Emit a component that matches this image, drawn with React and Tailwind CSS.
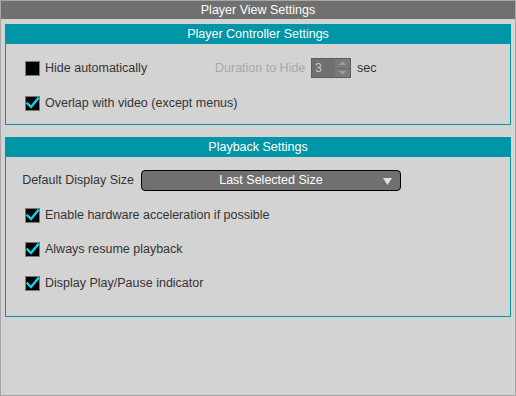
import React from "react";

function Check({ checked }) {
  return (
    <div className="w-[15px] h-[15px] bg-black border border-[#7a7a7a] relative shrink-0">
      {checked && (
        <svg className="absolute left-[0px] top-[0px]" width="13" height="13" viewBox="0 0 13 13">
          <path d="M1.5 6.5 L5 10 L12 1.5" stroke="#12d2f0" strokeWidth="2.4" fill="none" strokeLinecap="square" />
        </svg>
      )}
    </div>
  );
}

function Row({ checked, label, className }) {
  return (
    <div className={"h-[20px] flex items-center gap-[5px] pl-[19px] " + (className || "")}>
      <Check checked={checked} />
      <span className="text-[12.5px] text-[#333]">{label}</span>
    </div>
  );
}

function Section({ title, children, className }) {
  return (
    <div className={"border border-[#0096a8] flex flex-col " + (className || "")}>
      <div className="h-[19px] bg-[#0096a8] text-white text-[12.5px] flex items-center justify-center">{title}</div>
      {children}
    </div>
  );
}

export default function App() {
  return (
    <div
      className="w-[516px] h-[396px] bg-[#d3d3d3] border border-[#a6a6a6] flex flex-col"
      style={{ fontFamily: '"Liberation Sans", Arial, sans-serif' }}
    >
      <div className="h-[18px] bg-[#707070] text-white text-[12.5px] flex items-center justify-center">
        Player View Settings
      </div>
      <div className="px-[4px] pt-[5px] flex flex-col gap-[12px]">
        <Section title="Player Controller Settings" className="pb-[11px]">
          <div className="pt-[14px] flex flex-col gap-[15px]">
            <div className="flex items-center h-[20px]">
              <Row checked={false} label="Hide automatically" className="w-[209px]" />
              <span className="w-[96px] text-[12.5px] text-[#a8a8a8]">Duration to Hide</span>
              <div className="w-[40px] h-[20px] bg-[#707070] border border-[#5c5c5c] flex">
                <div className="flex-1 text-[12.5px] text-[#c4ccd4] leading-[18px] pl-[3px]">3</div>
                <div className="w-[15px] flex flex-col bg-[#7a7a7a]">
                  <div className="flex-1 flex items-center justify-center border-b border-[#6a6a6a]">
                    <svg width="7" height="4" viewBox="0 0 7 4"><path d="M0 4 L3.5 0 L7 4Z" fill="#9c9c9c" /></svg>
                  </div>
                  <div className="flex-1 flex items-center justify-center">
                    <svg width="7" height="4" viewBox="0 0 7 4"><path d="M0 0 L3.5 4 L7 0Z" fill="#9c9c9c" /></svg>
                  </div>
                </div>
              </div>
              <span className="ml-[6px] text-[12.5px] text-[#333]">sec</span>
            </div>
            <Row checked label="Overlap with video (except menus)" />
          </div>
        </Section>
        <Section title="Playback Settings" className="pb-[23px]">
          <div className="pt-[13px] flex items-center h-[34px]">
            <div className="w-[128px] text-right text-[12.5px] text-[#333]">Default Display Size</div>
            <div className="ml-[7px] w-[260px] h-[21px] bg-[#707070] border border-black rounded-[4px] relative flex items-center justify-center text-white text-[12.5px]">
              Last Selected Size
              <svg className="absolute right-[8px] top-[7px]" width="9" height="7" viewBox="0 0 9 7"><path d="M0 0 L9 0 L4.5 7Z" fill="#e0e0e0" /></svg>
            </div>
          </div>
          <div className="pt-[14px] flex flex-col gap-[14px]">
            <Row checked label="Enable hardware acceleration if possible" />
            <Row checked label="Always resume playback" />
            <Row checked label="Display Play/Pause indicator" />
          </div>
        </Section>
      </div>
    </div>
  );
}
